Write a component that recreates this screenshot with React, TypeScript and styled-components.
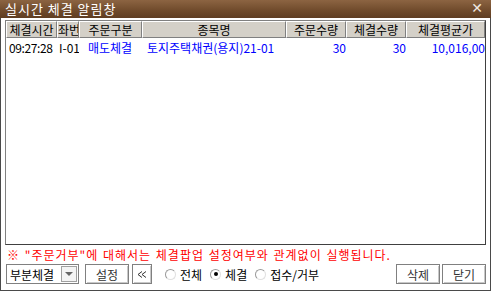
import React from 'react';
import styled, { createGlobalStyle } from 'styled-components';

const GlobalStyle = createGlobalStyle`
  html, body { margin: 0; padding: 0; background: #ffffff; }
  body { font-family: "Noto Sans CJK KR", "Noto Sans", sans-serif; font-size: 12px; }
`;

const Window = styled.div`
  width: 491px;
  height: 291px;
  box-sizing: border-box;
  border: 1px solid #4a4a4a;
  border-top: none;
  background: #ffffff;
  display: flex;
  flex-direction: column;
`;

const TitleBar = styled.div`
  height: 18px;
  margin: 0 -1px;
  background: linear-gradient(#8c6442, #6f4a2b 60%, #5f3d22);
  color: #ffffff;
  display: flex;
  align-items: center;
  justify-content: space-between;
  padding: 0 7px 0 5px;
  font-size: 13px;
  letter-spacing: 1px;
  line-height: 18px;
`;

const CloseX = styled.span`
  font-size: 14px;
  color: #f0e8e0;
  font-family: "DejaVu Sans", sans-serif;
  margin-top: -2px;
`;

const Body = styled.div`
  flex: 1;
  display: flex;
  flex-direction: column;
  padding: 2px 4px 4px 4px;
`;

const Grid = styled.div`
  height: 225px;
  box-sizing: border-box;
  border: 1px solid #808080;
  border-right-color: #404040;
  border-bottom-color: #404040;
  overflow: hidden;
`;

const cols = '51px 22px 63px 144px 60px 60px 79px';

const HeaderRow = styled.div`
  display: grid;
  grid-template-columns: ${cols};
  height: 17px;
`;

const HeadCell = styled.div`
  background: #d4d0c8;
  border-top: 1px solid #ffffff;
  border-left: 1px solid #ffffff;
  border-right: 1px solid #808080;
  border-bottom: 1px solid #808080;
  box-sizing: border-box;
  text-align: center;
  line-height: 15px;
  white-space: nowrap;
  overflow: hidden;
  color: #000;
`;

const DataRow = styled.div`
  display: grid;
  grid-template-columns: ${cols};
  height: 17px;
  line-height: 17px;
  margin-top: 1px;
`;

const Cell = styled.div<{ $align?: string; $blue?: boolean; $pad?: number; $tight?: boolean }>`
  text-align: ${(p) => p.$align || 'left'};
  color: ${(p) => (p.$blue ? '#0000ff' : '#000000')};
  padding-left: ${(p) => (p.$pad ?? 0)}px;
  letter-spacing: ${(p) => (p.$tight ? '-0.4px' : '0')};
  white-space: nowrap;
  overflow: hidden;
`;

const Notice = styled.div`
  color: #ff0000;
  height: 16px;
  line-height: 16px;
  margin-top: 2px;
  padding-left: 2px;
  letter-spacing: 1px;
  word-spacing: 1px;
  white-space: nowrap;
`;

const Controls = styled.div`
  display: flex;
  align-items: center;
  height: 20px;
  margin-top: 1px;
`;

const Combo = styled.div`
  width: 73px;
  height: 20px;
  margin-left: 1px;
  box-sizing: border-box;
  border: 1px solid #808080;
  display: flex;
  align-items: center;
  justify-content: space-between;
  padding-left: 3px;
`;

const ComboArrow = styled.div`
  width: 16px;
  height: 16px;
  margin-right: 1px;
  box-sizing: border-box;
  border: 1px solid #a0a0a0;
  background: #f4f4f4;
  display: flex;
  align-items: center;
  justify-content: center;
`;

const Button = styled.div<{ $w: number; $ml: number }>`
  width: ${(p) => p.$w}px;
  margin-left: ${(p) => p.$ml}px;
  height: 20px;
  box-sizing: border-box;
  border: 1px solid #808080;
  box-shadow: inset 1px 1px 0 #ffffff, inset -1px -1px 0 #c8c8c8;
  background: #ffffff;
  display: flex;
  align-items: center;
  justify-content: center;
  color: #333;
`;

const RadioGroup = styled.div`
  display: flex;
  align-items: center;
  margin-left: 13px;
`;

const RadioItem = styled.label`
  display: flex;
  align-items: center;
  gap: 4px;
  margin-right: 8px;
`;

const RadioDot = styled.span<{ $on?: boolean }>`
  width: 11px;
  height: 11px;
  box-sizing: border-box;
  border-radius: 50%;
  border: 1px solid #9a9a9a;
  border-right-color: #e0e0e0;
  border-bottom-color: #e0e0e0;
  background: #ffffff;
  display: flex;
  align-items: center;
  justify-content: center;
  &::after {
    content: '';
    width: 4px;
    height: 4px;
    border-radius: 50%;
    background: ${(p) => (p.$on ? '#000' : 'transparent')};
  }
`;

const Spacer = styled.div`
  flex: 1;
`;

const headers = ['체결시간', '좌번', '주문구분', '종목명', '주문수량', '체결수량', '체결평균가'];

export default function App() {
  return (
    <>
      <GlobalStyle />
      <Window>
        <TitleBar>
          <span>실시간 체결 알림창</span>
          <CloseX>✕</CloseX>
        </TitleBar>
        <Body>
          <Grid>
            <HeaderRow>
              {headers.map((h) => (
                <HeadCell key={h}>{h}</HeadCell>
              ))}
            </HeaderRow>
            <DataRow>
              <Cell $pad={3} $tight>09:27:28</Cell>
              <Cell $pad={2}>I-01</Cell>
              <Cell $blue $pad={9}>매도체결</Cell>
              <Cell $blue $pad={5}>토지주택채권(용지)21-01</Cell>
              <Cell $blue $align="right">30</Cell>
              <Cell $blue $align="right">30</Cell>
              <Cell $blue $align="right">10,016,00</Cell>
            </DataRow>
          </Grid>
          <Notice>※ "주문거부"에 대해서는 체결팝업 설정여부와 관계없이 실행됩니다.</Notice>
          <Controls>
            <Combo>
              <span>부분체결</span>
              <ComboArrow>
                <svg width="8" height="5" viewBox="0 0 8 5">
                  <path d="M0 0 L8 0 L4 4 Z" fill="#666" />
                </svg>
              </ComboArrow>
            </Combo>
            <Button $w={44} $ml={6}>설정</Button>
            <Button $w={20} $ml={3}>
              <svg width="10" height="7" viewBox="0 0 10 7">
                <path d="M5 0.5 L1 3.5 L5 6.5 M9 0.5 L5 3.5 L9 6.5" stroke="#333" fill="none" strokeWidth="1" />
              </svg>
            </Button>
            <RadioGroup>
              <RadioItem><RadioDot />전체</RadioItem>
              <RadioItem><RadioDot $on />체결</RadioItem>
              <RadioItem><RadioDot />접수/거부</RadioItem>
            </RadioGroup>
            <Spacer />
            <Button $w={44} $ml={0}>삭제</Button>
            <Button $w={44} $ml={2}>닫기</Button>
          </Controls>
        </Body>
      </Window>
    </>
  );
}
